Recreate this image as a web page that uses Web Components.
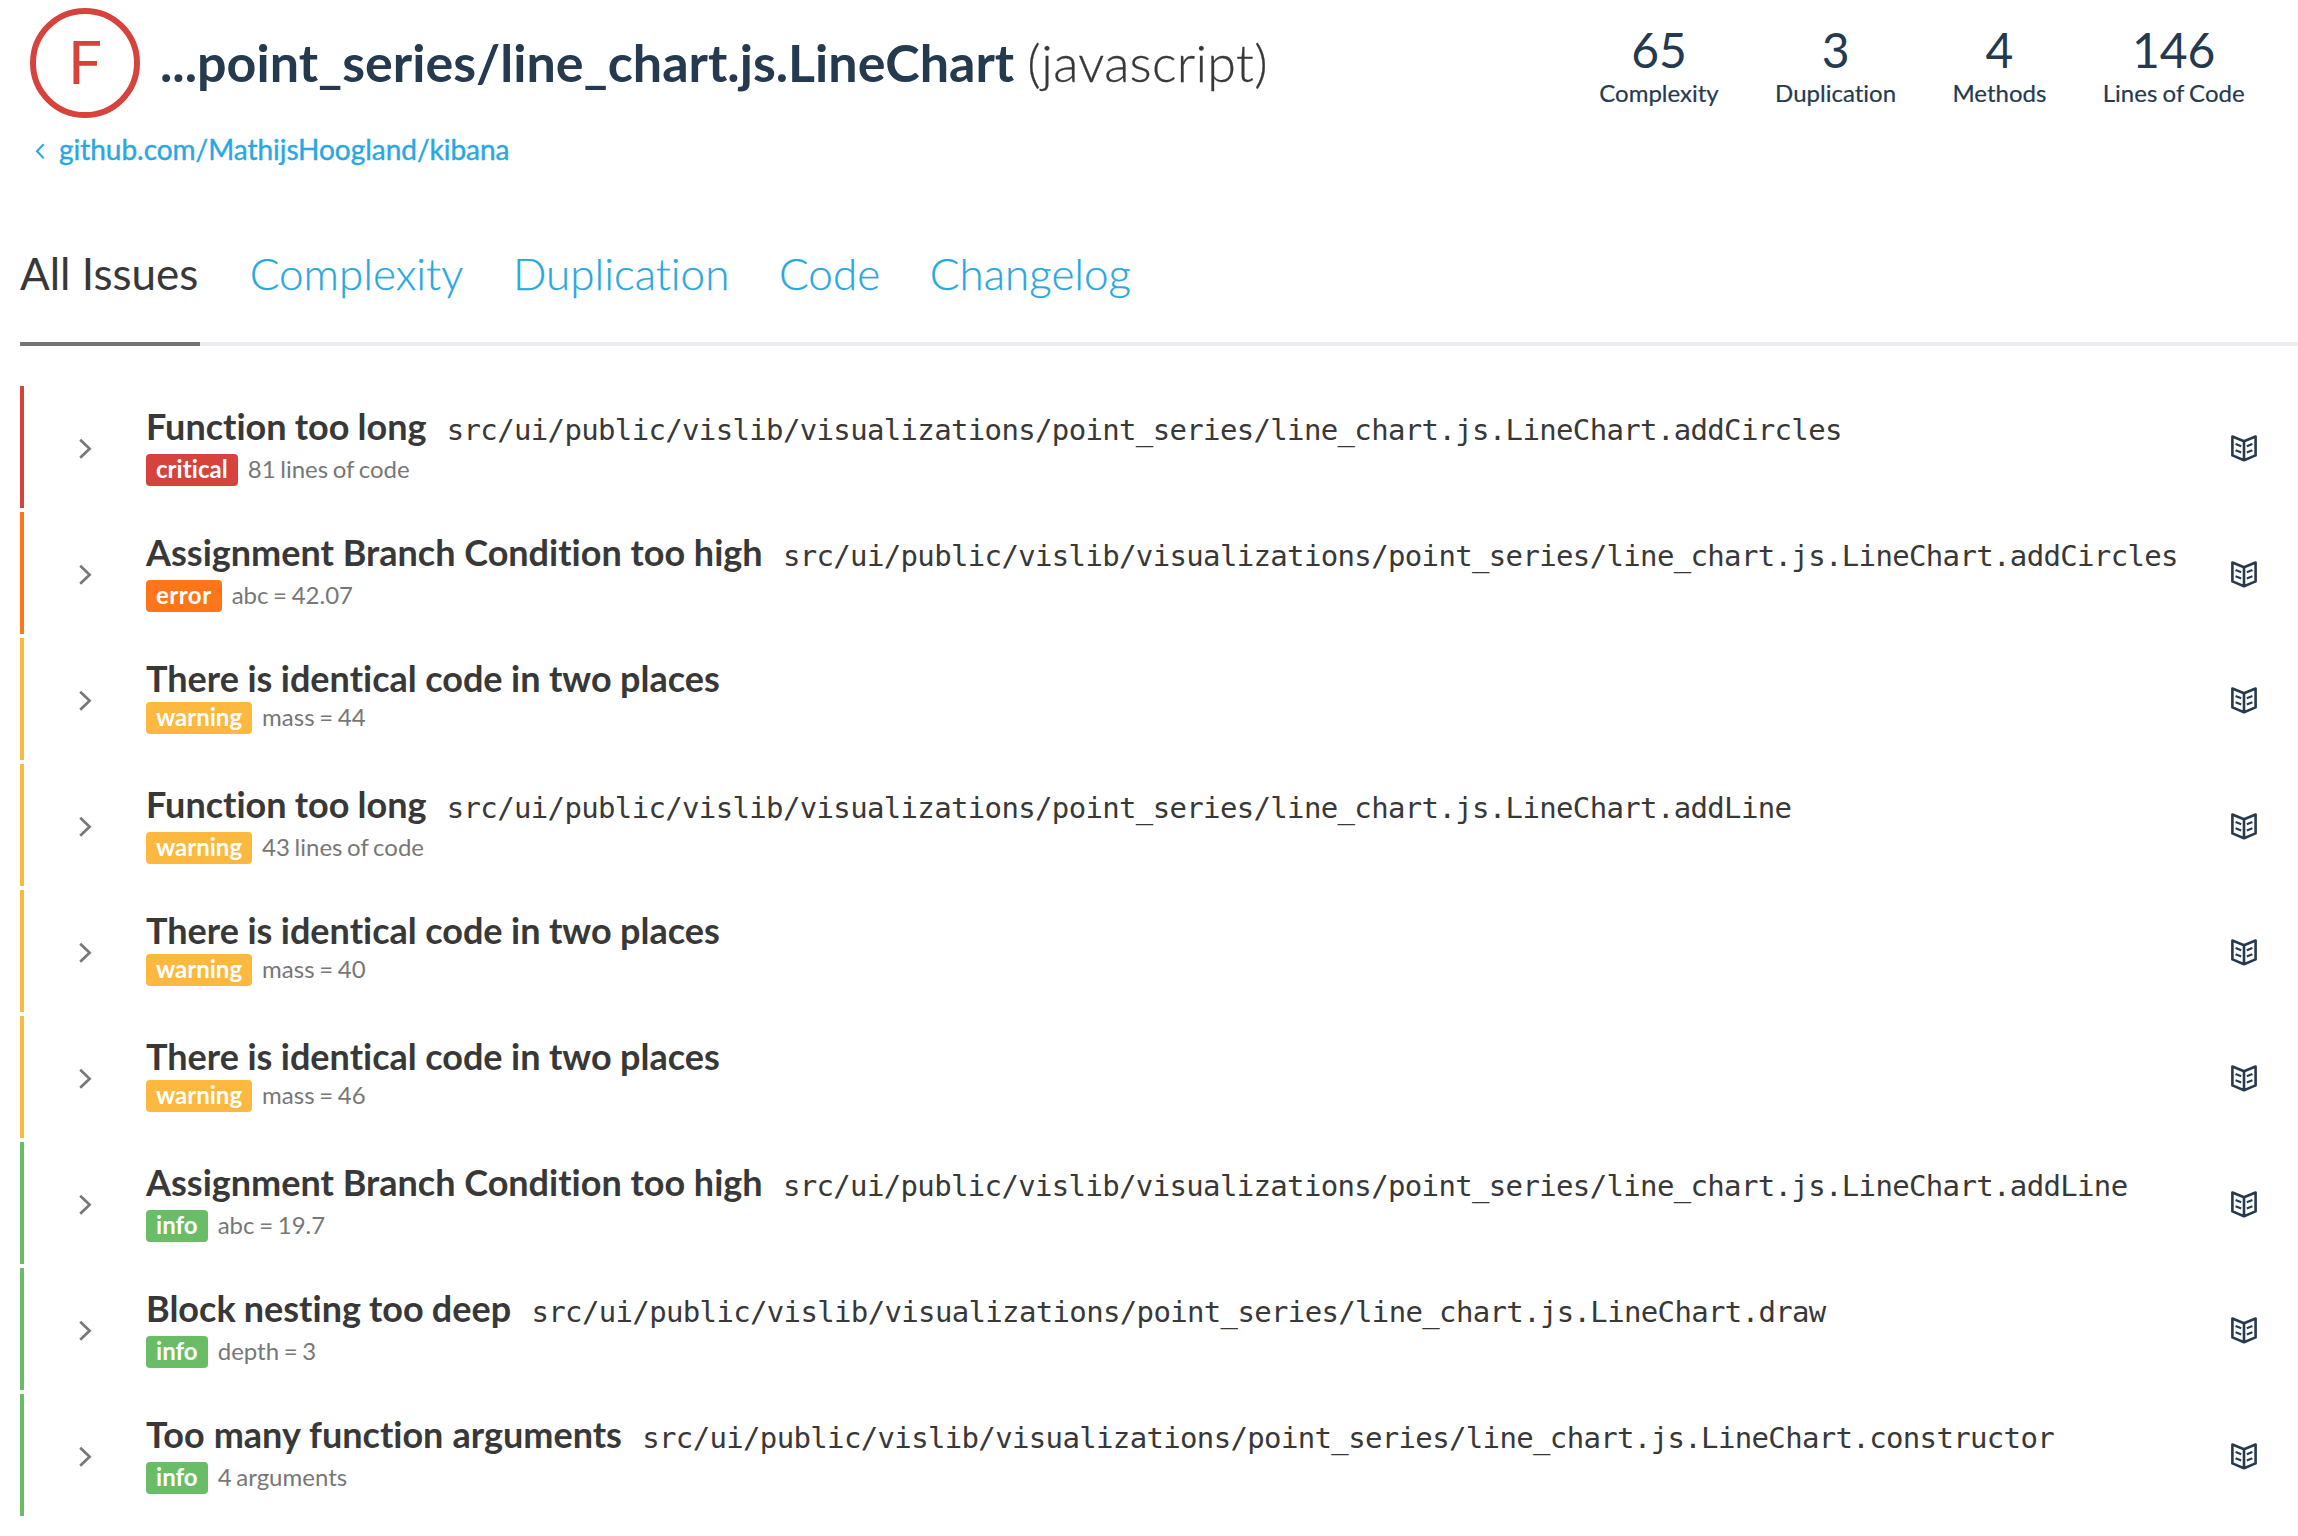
<!DOCTYPE html>
<html lang="en"><head><meta charset="utf-8"><title>LineChart issues</title>
<style>
body{margin:0;background:#fff;font-family:Lato,"Liberation Sans",sans-serif;font-variant-ligatures:none;color:#383838}
</style></head><body>
<issue-page></issue-page>
<script>
const define=(name,html,setup)=>customElements.define(name,class extends HTMLElement{
  connectedCallback(){
    const root=this.attachShadow({mode:'open'});
    const t=document.createElement('template');
    t.innerHTML=html;
    root.append(t.content.cloneNode(true));
    if(setup)setup(this,root);
  }
});

define('grade-badge',`<style>
:host{display:block;box-sizing:border-box;width:110px;height:110px;border:6px solid #d6433d;border-radius:50%;color:#d6433d;font-size:60px;line-height:94px;text-align:center;flex:none}
</style><slot></slot>`);

define('stat-item',`<style>
:host{display:flex;flex-direction:column;align-items:center;color:#25394f;white-space:nowrap}
.n{font-size:48px;line-height:57px}
.l{font-size:24px;line-height:29px;word-spacing:-.9px;-webkit-text-stroke:.2px}
</style><div class="n"><slot name="value"></slot></div><div class="l"><slot></slot></div>`);

define('page-header',`<style>
:host{display:block;height:200px}
.top{display:flex;align-items:flex-start;padding:8px 53.4px 0 30px}
.title{display:flex;margin:23px 0 0 20px;line-height:62px;font-size:52px;gap:13px;white-space:nowrap}
h1{margin:0;font-size:inherit;font-weight:700;color:#25394f}
.lang{font-weight:300;letter-spacing:.3px;-webkit-text-stroke:.3px}
.stats{display:flex;gap:56.4px;margin:13px 0 0 auto}
a{display:flex;align-items:center;gap:14px;margin:14px 0 0 34px;font-size:28px;line-height:34px;color:#29a7e1;width:max-content}
a span{letter-spacing:-.03px;-webkit-text-stroke:.4px}
svg{display:block;width:11px;height:18px;margin-top:4px;fill:none;stroke:currentColor;stroke-width:2}
</style>
<div class="top"><grade-badge>F</grade-badge>
<div class="title"><h1>...point_series/line_chart.js.LineChart</h1><span class="lang">(javascript)</span></div>
<div class="stats"><slot></slot></div></div>
<a><svg viewBox="0 0 11 18"><path d="M9.7 2.3L3 9.3L9.7 16.3"/></svg><span>github.com/MathijsHoogland/kibana</span></a>`);

define('tab-item',`<style>
:host{display:block;box-sizing:border-box;height:99px;padding-bottom:47px;line-height:52px;font-size:44px;font-weight:300;color:#29a7e1;white-space:nowrap;-webkit-text-stroke:.25px}
:host([active]){width:180px;font-weight:400;color:#383838;border-bottom:4px solid #757575;padding-bottom:43px;-webkit-text-stroke:0}
</style><slot></slot>`);

define('tab-bar',`<style>
:host{display:block;padding-left:20px;margin-top:47px}
nav{display:flex;gap:49.7px;background:linear-gradient(#eceef1,#eceef1) bottom/100% 4px no-repeat}
</style><nav><slot></slot></nav>`);

define('book-icon',`<style>
:host{display:block;flex:none;width:28px;height:28px;color:#25394f}
svg{display:block;fill:none;stroke:currentColor;stroke-width:2.6;stroke-linejoin:round}
</style><svg width="28" height="28" viewBox="0 0 28 28">
<path d="M2.4 2.5L14 7.3L25.6 2.5V21.4L14 26.2L2.4 21.4ZM14 7.3V26.2"/>
<path stroke-width="2.2" d="M5.6 10L11.2 12.2M5.6 16.2L11.2 18.4M22.4 10L16.8 12.2M22.4 16.2L16.8 18.4"/></svg>`);

define('issue-row',`<style>
:host{display:flex;box-sizing:border-box;height:122px;border-left:4px solid var(--c);--c:#fdb840;--track:0px}
:host([level=critical]){--c:#d6433d;--track:.05px}
:host([level=error]){--c:#ff7519;--track:.5px}
:host([level=info]){--c:#68bd66;--track:.05px}
.chev{display:block;flex:none;width:16px;height:24px;margin:51px 53px 0 53px;fill:none;stroke:#777;stroke-width:2.7}
.body{flex:1;padding-top:18px;white-space:nowrap}
.head{display:flex;align-items:baseline;gap:20.3px;height:44px}
.t{font-size:36px;line-height:44px;font-weight:700;word-spacing:var(--ws,0)}
.p{font:29px/34px "DejaVu Sans Mono",monospace;letter-spacing:-.652px}
.sub{display:flex;gap:10px;margin-top:2px;font-size:24px;line-height:29px;color:#777;word-spacing:-1.5px}
:host([path]) .sub{margin-top:6px}
.tag{padding:0 10px 3px;border-radius:4px;background:var(--c);color:#fff;font-weight:700;letter-spacing:var(--track)}
book-icon{margin:48px 40px 0 0}
</style>
<svg class="chev" viewBox="0 0 16 24"><path d="M3.2 2.7L12.6 11.7L3.2 20.7"/></svg>
<div class="body"><div class="head"><span class="t"></span></div>
<div class="sub"><span class="tag"></span><span><slot></slot></span></div></div>
<book-icon></book-icon>`,(el,root)=>{
  root.querySelector('.t').textContent=el.getAttribute('name');
  root.querySelector('.tag').textContent=el.getAttribute('level');
  const path=el.getAttribute('path');
  if(path){
    const p=document.createElement('span');
    p.className='p';
    p.textContent='src/ui/public/vislib/visualizations/point_series/line_chart.js.LineChart.'+path;
    root.querySelector('.head').append(p);
  }
});

define('issue-page',`<style>
:host{display:block;height:1536px;overflow:hidden}
.list{display:flex;flex-direction:column;gap:4px;margin:40px 0 0 20px}
issue-row[name^=Function],issue-row[name^=Block]{--ws:-.6px}
issue-row[name^=There]{--ws:-.3px}
issue-row[name^=Too]{--ws:.3px}
</style>
<page-header>
<stat-item><span slot="value">65</span>Complexity</stat-item>
<stat-item><span slot="value">3</span>Duplication</stat-item>
<stat-item><span slot="value">4</span>Methods</stat-item>
<stat-item><span slot="value">146</span>Lines of Code</stat-item>
</page-header>
<tab-bar><tab-item active>All Issues</tab-item><tab-item>Complexity</tab-item><tab-item>Duplication</tab-item><tab-item>Code</tab-item><tab-item>Changelog</tab-item></tab-bar>
<div class="list">
<issue-row level="critical" name="Function too long" path="addCircles">81 lines of code</issue-row>
<issue-row level="error" name="Assignment Branch Condition too high" path="addCircles">abc = 42.07</issue-row>
<issue-row level="warning" name="There is identical code in two places">mass = 44</issue-row>
<issue-row level="warning" name="Function too long" path="addLine">43 lines of code</issue-row>
<issue-row level="warning" name="There is identical code in two places">mass = 40</issue-row>
<issue-row level="warning" name="There is identical code in two places">mass = 46</issue-row>
<issue-row level="info" name="Assignment Branch Condition too high" path="addLine">abc = 19.7</issue-row>
<issue-row level="info" name="Block nesting too deep" path="draw">depth = 3</issue-row>
<issue-row level="info" name="Too many function arguments" path="constructor">4 arguments</issue-row>
</div>`);
</script></body></html>
